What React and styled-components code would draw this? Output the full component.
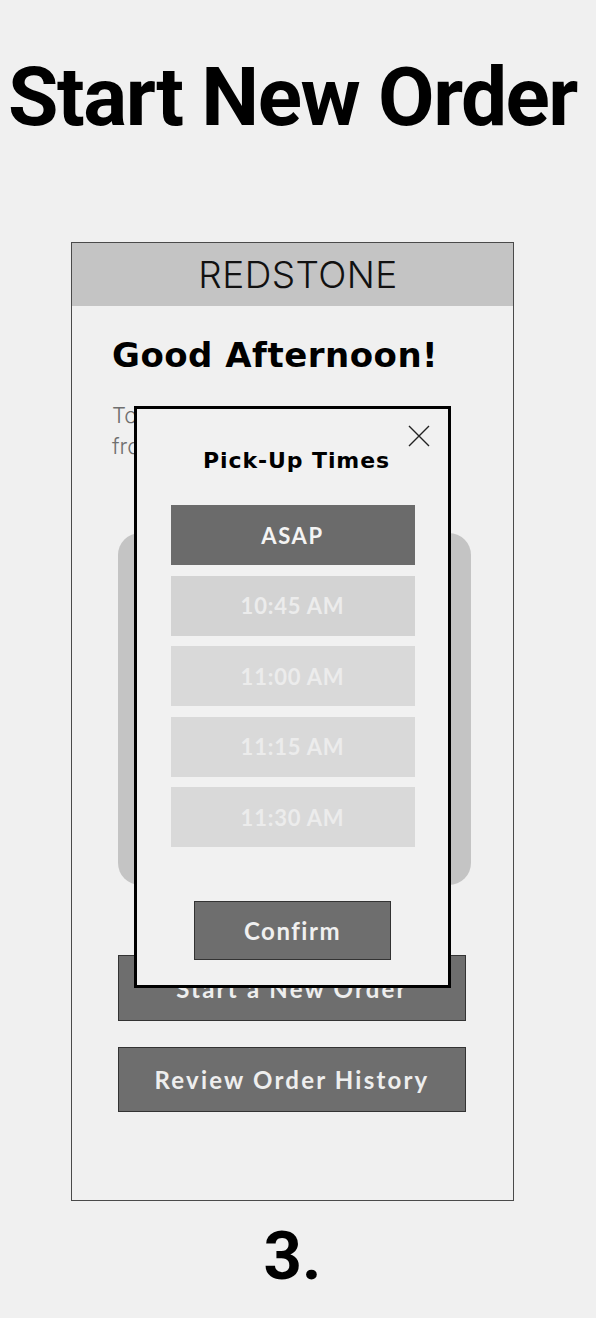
import React from 'react';
import styled, { createGlobalStyle } from 'styled-components';

const GlobalStyle = createGlobalStyle`
  html, body {
    margin: 0;
    padding: 0;
    background: #f0f0f0;
  }
`;

const Page = styled.div`
  width: 585px;
  min-height: 1318px;
  display: flex;
  flex-direction: column;
  align-items: center;
  background: #f0f0f0;
`;

const Title = styled.h1`
  margin: 56px 0 104px;
  font-family: Roboto, "Liberation Sans", sans-serif;
  font-weight: 700;
  font-size: 82px;
  letter-spacing: -1.5px;
  line-height: 1;
  color: #000;
  white-space: nowrap;
`;

const Phone = styled.div`
  position: relative;
  width: 443px;
  height: 959px;
  box-sizing: border-box;
  border: 1px solid #4a4a4a;
  background: #f0f0f0;
  display: flex;
  flex-direction: column;
`;

const Header = styled.div`
  height: 63px;
  padding-left: 11px;
  background: #c4c4c4;
  display: flex;
  align-items: center;
  justify-content: center;
  font-family: Inter, "Open Sans", sans-serif;
  font-weight: 300;
  font-size: 37px;
  letter-spacing: 0.4px;
  color: #111;
`;

const Body = styled.div`
  padding: 0 40px;
  display: flex;
  flex-direction: column;
`;

const Greeting = styled.h2`
  margin: 32px 0 28px;
  font-family: "DejaVu Sans", Inter, sans-serif;
  font-weight: 700;
  font-size: 34px;
  letter-spacing: 0.5px;
  line-height: 1;
  color: #000;
  white-space: nowrap;
`;

const Intro = styled.p`
  margin: 0;
  font-family: Inter, "Open Sans", sans-serif;
  font-weight: 300;
  font-size: 22px;
  line-height: 31px;
  color: #6f6f6f;
`;

const Card = styled.div`
  margin: 71px 0 70px 6px;
  width: 353px;
  height: 352px;
  border-radius: 22px;
  background: #c4c4c4;
`;

const ActionButton = styled.button`
  margin: 0 0 ${(p) => p.$gap}px 6px;
  width: 348px;
  height: ${(p) => p.$h}px;
  box-sizing: border-box;
  border: 1px solid #333;
  background: #6e6e6e;
  color: #eeeeee;
  font-family: Lato, "Open Sans", sans-serif;
  font-weight: 700;
  font-size: 24px;
  letter-spacing: 2.2px;
  padding: 0;
`;

const Modal = styled.div`
  position: absolute;
  left: 62px;
  top: 163px;
  width: 317px;
  height: 582px;
  box-sizing: border-box;
  border: 3px solid #000;
  background: #f1f1f1;
  display: flex;
  flex-direction: column;
  align-items: center;
`;

const Close = styled.svg`
  position: absolute;
  top: 15px;
  right: 17px;
`;

const ModalTitle = styled.h3`
  margin: 41px 0 33px;
  padding-left: 8px;
  font-family: "DejaVu Sans", Inter, sans-serif;
  font-weight: 700;
  font-size: 22px;
  letter-spacing: 0.9px;
  line-height: 1;
  color: #000;
`;

const Options = styled.div`
  display: flex;
  flex-direction: column;
  gap: 10.5px;
`;

const Option = styled.div`
  width: 244px;
  height: 60px;
  display: flex;
  align-items: center;
  justify-content: center;
  background: ${(p) => (p.$active ? '#6b6b6b' : p.$hover ? '#d3d3d3' : '#d9d9d9')};
  color: ${(p) => (p.$active ? '#f4f4f4' : '#ececec')};
  font-family: Lato, "Open Sans", sans-serif;
  font-weight: 700;
  font-size: 22px;
  letter-spacing: ${(p) => (p.$active ? 1.6 : 0.8)}px;
`;

const Confirm = styled.button`
  margin-top: 54px;
  width: 197px;
  height: 59px;
  box-sizing: border-box;
  border: 1px solid #333;
  background: #6e6e6e;
  color: #f0f0f0;
  font-family: Lato, "Open Sans", sans-serif;
  font-weight: 700;
  font-size: 24px;
  letter-spacing: 1.5px;
  padding: 0;
`;

const Step = styled.div`
  margin-top: 22px;
  font-family: Roboto, "Liberation Sans", sans-serif;
  font-weight: 700;
  font-size: 67px;
  line-height: 1;
  color: #000;
`;

const times = ['ASAP', '10:45 AM', '11:00 AM', '11:15 AM', '11:30 AM'];

export default function App() {
  return (
    <Page>
      <GlobalStyle />
      <Title>Start New Order</Title>
      <Phone>
        <Header>REDSTONE</Header>
        <Body>
          <Greeting>Good Afternoon!</Greeting>
          <Intro>
            Today's pick-up times
            <br />
            from Redstone
          </Intro>
          <Card />
          <ActionButton $h={66} $gap={26}>Start a New Order</ActionButton>
          <ActionButton $h={65} $gap={0}>Review Order History</ActionButton>
        </Body>
        <Modal>
          <Close width="24" height="24" viewBox="0 0 24 24">
            <path d="M2 2 L22 22 M22 2 L2 22" stroke="#222" strokeWidth="1.4" fill="none" />
          </Close>
          <ModalTitle>Pick-Up Times</ModalTitle>
          <Options>
            {times.map((t, i) => (
              <Option key={t} $active={i === 0} $hover={i === 1}>
                {t}
              </Option>
            ))}
          </Options>
          <Confirm>Confirm</Confirm>
        </Modal>
      </Phone>
      <Step>3.</Step>
    </Page>
  );
}
